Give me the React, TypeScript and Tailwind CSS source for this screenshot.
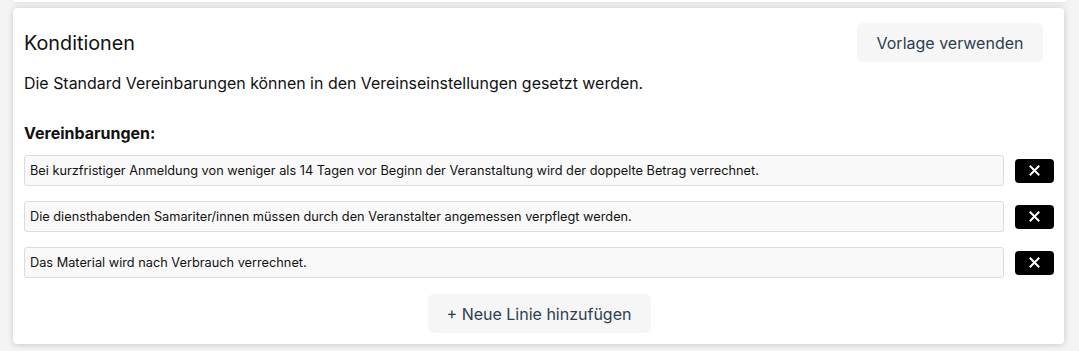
import React from "react";

const rows = [
  "Bei kurzfristiger Anmeldung von weniger als 14 Tagen vor Beginn der Veranstaltung wird der doppelte Betrag verrechnet.",
  "Die diensthabenden Samariter/innen müssen durch den Veranstalter angemessen verpflegt werden.",
  "Das Material wird nach Verbrauch verrechnet.",
];

export default function App() {
  return (
    <div className="w-[1079px] h-[351px] bg-[#f4f4f4] overflow-hidden font-['Inter',sans-serif] text-[#111]">
      <div className="h-[2px] mx-[13px] bg-white shadow-[0_1px_6px_rgba(0,0,0,0.18)]" />
      <div className="mt-[6px] mx-[13px] w-[1051px] h-[336px] bg-white rounded-[4px] shadow-[0_1px_6px_rgba(0,0,0,0.18)] pl-[11px] pr-[10px] pt-[15px]">
        <div className="flex items-center justify-between">
          <h2 className="text-[19.8px] leading-[24px] font-normal text-[#111]">Konditionen</h2>
          <button className="mr-[11px] h-[39px] w-[186px] rounded-[6px] bg-[#f6f6f6] text-[16px] text-[#2c3e50]">
            Vorlage verwenden
          </button>
        </div>
        <p className="mt-[10px] text-[15.95px] leading-[24px] text-[#111]">
          Die Standard Vereinbarungen können in den Vereinseinstellungen gesetzt werden.
        </p>
        <h3 className="mt-[25px] text-[16px] leading-[24px] font-bold text-[#111]">Vereinbarungen:</h3>
        <div className="mt-[10px] flex flex-col gap-[15px]">
          {rows.map((r) => (
            <div key={r} className="flex items-center gap-[11px]">
              <div className="flex-1 h-[31px] border border-[#dcdcdc] rounded-[3px] bg-[#f9f9f9] px-[5px] flex items-center text-[12.75px] text-[#111] font-['Inter',sans-serif]">
                {r}
              </div>
              <button className="w-[39px] h-[24px] rounded-[4px] bg-black flex items-center justify-center">
                <svg width="11" height="11" viewBox="0 0 11 11">
                  <path d="M1.5 1.5 L9.5 9.5 M9.5 1.5 L1.5 9.5" stroke="white" strokeWidth="2" strokeLinecap="square" />
                </svg>
              </button>
            </div>
          ))}
        </div>
        <div className="mt-[16px] flex justify-center">
          <button className="h-[39px] w-[223px] rounded-[6px] bg-[#f6f6f6] text-[16px] text-[#2c3e50]">
            + Neue Linie hinzufügen
          </button>
        </div>
      </div>
    </div>
  );
}
